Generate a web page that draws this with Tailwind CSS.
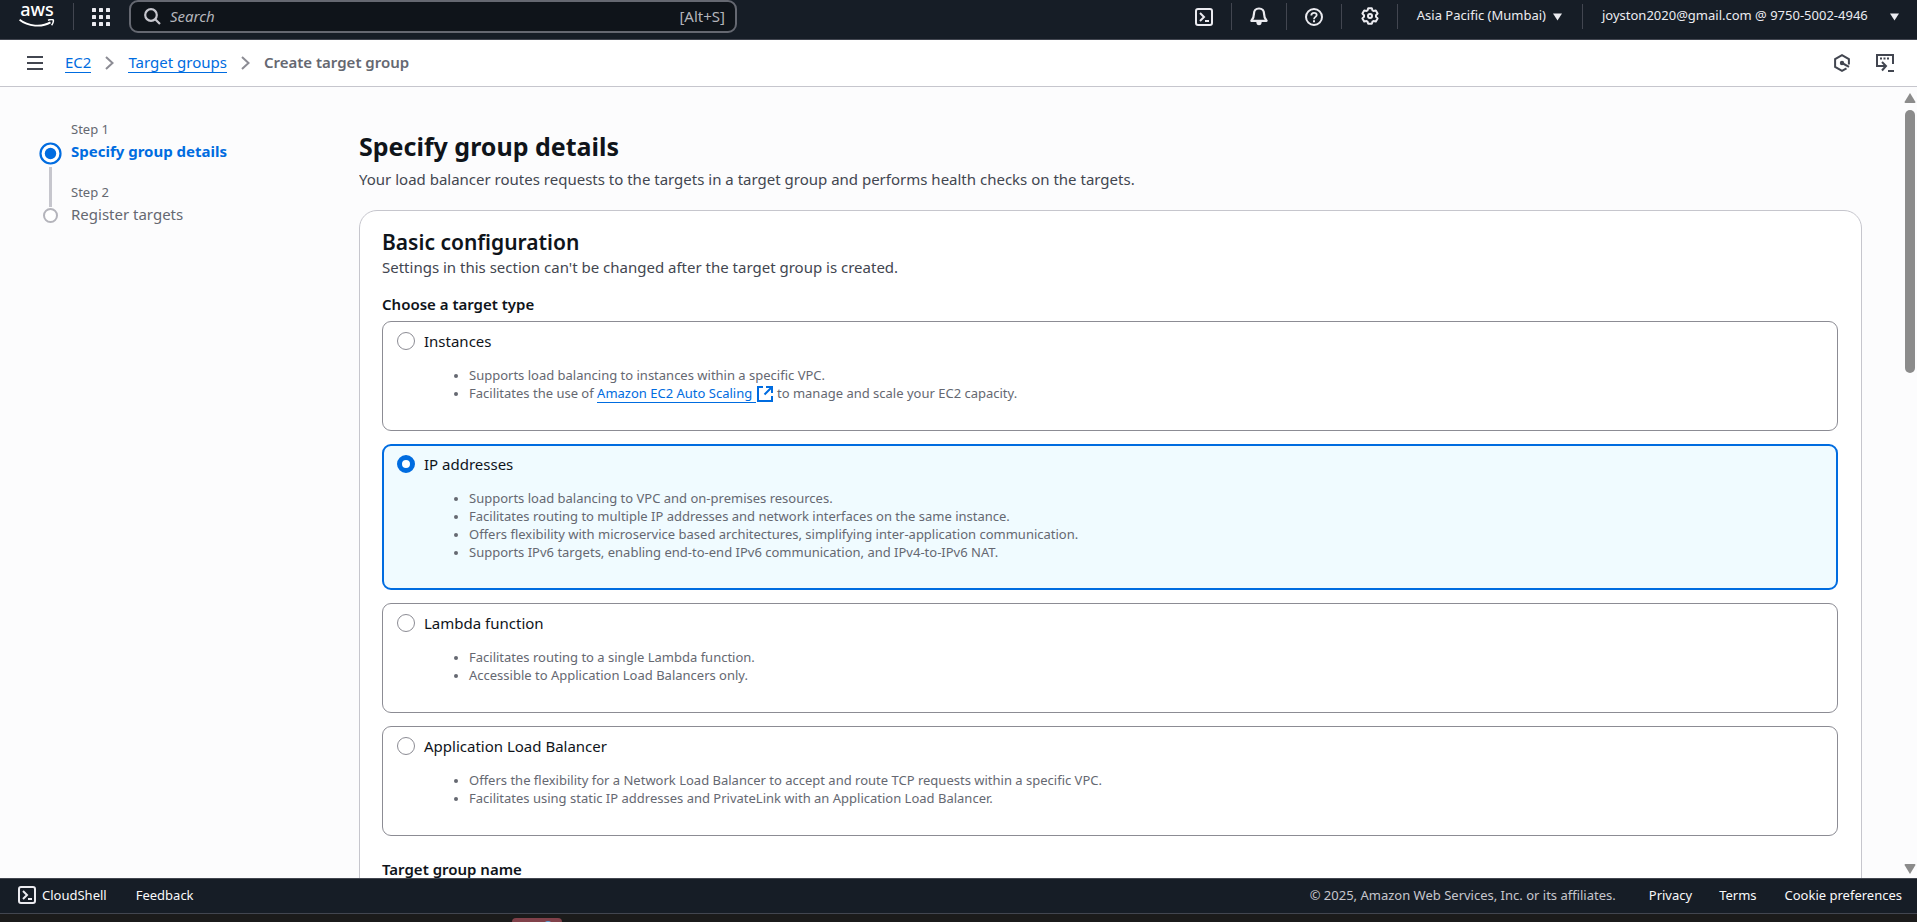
<!DOCTYPE html>
<html lang="en">
<head>
<meta charset="utf-8">
<meta name="viewport" content="width=device-width, initial-scale=1">
<title>Create target group | EC2</title>
<script src="https://cdn.jsdelivr.net/npm/@tailwindcss/browser@4"></script>
</head>
<body class="flex h-screen flex-col overflow-hidden bg-[#1b1b1b] font-['Noto_Sans','Open_Sans',sans-serif] text-[15px] leading-[22px] text-[#0f141a]">

<!-- Global navigation -->
<header class="flex h-10 shrink-0 items-start border-b border-[#424650] bg-[#161d26] text-[#ebebf0]">
  <a href="#" aria-label="AWS home" class="ml-[19px] mt-[2px] flex w-9 flex-col items-center text-white">
    <span class="h-[17px] text-[18px] leading-[15px] font-medium">aws</span>
    <svg class="h-2 w-9" viewBox="0 0 36 8" fill="none" aria-hidden="true"><path d="M.6.8C9 7.600 23 8.400 31.500 3.400" stroke="#fff" stroke-width="1.800"/><path d="M29 1.300c2-1.100 4.600-1 5.200-.4.500.7 0 3.500-1.600 5.300" stroke="#fff" stroke-width="1.500"/></svg>
  </a>
  <span class="ml-[18px] mt-[3px] h-[27px] w-px bg-[#424650]"></span>
  <button aria-label="Services" class="ml-[18px] mt-2">
    <svg class="size-[18px]" viewBox="0 0 18 18" fill="#ebebf0"><rect width="4" height="4" rx=".6"/><rect x="7" width="4" height="4" rx=".6"/><rect x="14" width="4" height="4" rx=".6"/><rect y="7" width="4" height="4" rx=".6"/><rect x="7" y="7" width="4" height="4" rx=".6"/><rect x="14" y="7" width="4" height="4" rx=".6"/><rect y="14" width="4" height="4" rx=".6"/><rect x="7" y="14" width="4" height="4" rx=".6"/><rect x="14" y="14" width="4" height="4" rx=".6"/></svg>
  </button>
  <label class="ml-[19px] flex h-[33px] w-[608px] items-center rounded-[9px] border-2 border-[#656871] bg-[#0f141a] pb-px pl-[13px] pr-[10px] text-[#b4b4bb]">
    <svg class="size-[17px]" viewBox="0 0 17 17" fill="none" stroke="#c6c6cd" stroke-width="2.200" aria-hidden="true"><circle cx="7" cy="7" r="5.800"/><path d="M11 11l5 5"/></svg>
    <input type="text" aria-label="Search" placeholder="Search" class="ml-[9px] min-w-0 flex-1 bg-transparent outline-none placeholder:italic placeholder:text-[#b4b4bb]">
    <span>[Alt+S]</span>
  </label>
  <nav class="ml-auto flex items-start text-[13px] leading-[26px]">
    <button aria-label="CloudShell" class="mt-2">
      <svg class="size-[18px]" viewBox="0 0 18 18" fill="none" stroke="#ebebf0" stroke-width="2"><rect x="1" y="1" width="16" height="16" rx="2"/><path d="M5 5l4 4-4 4M10 13h4"/></svg>
    </button>
    <span class="ml-[18px] mt-[3px] h-[27px] w-px bg-[#424650]"></span>
    <button aria-label="Notifications" class="ml-[18px] mt-[7px]">
      <svg class="h-[19px] w-[18px]" viewBox="0 0 18 19" fill="none" stroke="#ebebf0" stroke-width="2.200" stroke-linejoin="round"><path d="M9 1.500C5.600 1.500 4 4 4 6.500c0 3.800-.7 5-2.600 7.300h15.200C14.700 11.500 14 10.300 14 6.500c0-2.500-1.600-5-5-5z"/><path d="M6.300 15h5.400c0 2-1 3.300-2.700 3.300S6.300 17 6.300 15z" fill="#ebebf0" stroke="none"/></svg>
    </button>
    <span class="ml-[18px] mt-[3px] h-[27px] w-px bg-[#424650]"></span>
    <button aria-label="Support" class="ml-[18px] mt-2">
      <svg class="size-[18px]" viewBox="0 0 18 18" fill="none" stroke="#ebebf0" stroke-width="2"><circle cx="9" cy="9" r="8"/><path d="M6.300 7.400C6.300 5.700 7.400 4.800 9 4.800s2.700.9 2.700 2.300C11.700 8.800 9 9 9 11.200" stroke-width="1.800"/><path d="M9 12.200v2"/></svg>
    </button>
    <span class="ml-[18px] mt-1 h-[25px] w-px bg-[#424650]"></span>
    <button aria-label="Settings" class="ml-[19px] mt-[7px]">
      <svg class="size-[18px]" viewBox="0 0 18 18" fill="none" stroke="#ebebf0" stroke-width="2" stroke-linejoin="round"><path d="M7.200 1.200h3.600l.7 2.200 1 .6 2.300-.5 1.800 3.100L15 8.300v1.400l1.600 1.700-1.800 3.100-2.300-.5-1 .6-.7 2.200H7.200l-.7-2.200-1-.6-2.300.5-1.800-3.100L3 9.700V8.300L1.400 6.600l1.800-3.100 2.300.5 1-.6z"/><circle cx="9" cy="9" r="2"/></svg>
    </button>
    <span class="ml-[18px] mt-1 h-[25px] w-px bg-[#424650]"></span>
    <button class="ml-[19px] mt-[2px] flex items-center gap-[7px]">Asia Pacific (Mumbai)
      <svg class="mt-[3px] h-2 w-[9px]" viewBox="0 0 9 8" fill="#ebebf0"><path d="M0 .5h9L4.500 7.500z"/></svg>
    </button>
    <span class="ml-[20px] mt-1 h-[25px] w-px bg-[#424650]"></span>
    <button class="ml-[19px] mr-[18px] mt-[2px] flex min-w-[297px] items-center justify-between gap-[7px]">joyston2020@gmail.com @ 9750-5002-4946
      <svg class="mt-[3px] h-2 w-[9px]" viewBox="0 0 9 8" fill="#ebebf0"><path d="M0 .5h9L4.500 7.500z"/></svg>
    </button>
  </nav>
</header>

<!-- Breadcrumbs -->
<div class="flex h-[47px] shrink-0 items-center border-b border-[#c6c6cd] bg-white pb-px pl-[27px] pr-[23px]">
  <button aria-label="Open navigation"><svg class="h-[14px] w-4" viewBox="0 0 16 14" stroke="#424650" stroke-width="2"><path d="M0 1h16M0 7h16M0 13h16"/></svg></button>
  <nav aria-label="Breadcrumbs" class="ml-[22px] flex items-center gap-[14px]">
    <a href="#" class="border-b border-[#006ce0] leading-[20px] text-[#006ce0]">EC2</a>
    <svg class="h-[14px] w-[9px]" viewBox="0 0 9 14" fill="none" stroke="#8c8c94" stroke-width="2" aria-hidden="true"><path d="M1 1l6.500 6L1 13"/></svg>
    <a href="#" class="border-b border-[#006ce0] leading-[20px] text-[#006ce0]">Target groups</a>
    <svg class="h-[14px] w-[9px]" viewBox="0 0 9 14" fill="none" stroke="#8c8c94" stroke-width="2" aria-hidden="true"><path d="M1 1l6.500 6L1 13"/></svg>
    <span aria-current="page" class="leading-[21px] font-semibold text-[#656871]">Create target group</span>
  </nav>
  <div class="ml-auto flex items-center gap-[26px]">
    <button aria-label="Amazon Q"><svg class="h-[18px] w-4" viewBox="0 0 16 18" fill="none" stroke="#424650" stroke-width="2"><path d="M14.900 10.500V5.100L8 1.200 1.100 5.100v7.800L8 16.800l4.500-2.500"/><circle cx="8" cy="9" r="2.200" fill="#424650" stroke="none"/><path d="M8 9l7 3.800"/></svg></button>
    <button aria-label="Open in CloudShell"><svg class="size-[18px]" viewBox="0 0 18 18" fill="none" stroke="#424650" stroke-width="2"><path d="M4 12H1V1h16v9"/><path d="M4 4.500h2M7.500 4.500h2M11 4.500h2"/><path d="M4 12h6M6 8l4 4-4 4.500M12 17h6"/></svg></button>
  </div>
</div>

<!-- Page body -->
<div class="flex min-h-0 flex-1 bg-[#fcfcfd]">
  <aside class="w-[359px] shrink-0 pl-[39px] pt-[32px]">
    <ol>
      <li class="flex gap-[9px]">
        <div class="flex w-[23px] flex-col items-center pt-[23px]">
          <svg class="size-[23px]" viewBox="0 0 23 23" aria-hidden="true"><circle cx="11.500" cy="11.500" r="10" fill="#fff" stroke="#006ce0" stroke-width="2.200"/><circle cx="11.500" cy="11.500" r="5.700" fill="#006ce0"/></svg>
          <span class="mt-[2px] h-[40px] w-[3px] bg-[#c6c6cd]"></span>
        </div>
        <div>
          <div class="text-[13px] leading-5 text-[#656871]">Step 1</div>
          <a href="#" aria-current="step" class="block leading-[24px] font-bold text-[#006ce0]">Specify group details</a>
          <div class="mt-[19px] text-[13px] leading-5 text-[#656871]">Step 2</div>
        </div>
      </li>
      <li class="-mt-[6px] flex items-center gap-[9px]">
        <span class="flex w-[23px] justify-center pt-[3px]"><span class="size-[15px] rounded-full border-2 border-[#b4b4bb] bg-white"></span></span>
        <span class="leading-[26px] text-[#656871]">Register targets</span>
      </li>
    </ol>
  </aside>

  <main class="min-w-0 flex-1 overflow-hidden pr-[41px] pt-[42px]">
    <h1 class="text-[25px] leading-[34px] font-bold">Specify group details</h1>
    <p class="mt-[5px] text-[#424650]">Your load balancer routes requests to the targets in a target group and performs health checks on the targets.</p>

    <section class="mt-5 rounded-[18px] border border-[#c6c6cd] bg-white pb-8 pl-[22px] pr-[23px] pt-[17px]">
      <h2 class="text-[21px] leading-[28px] font-semibold">Basic configuration</h2>
      <p class="text-[#424650]">Settings in this section can't be changed after the target group is created.</p>

      <fieldset class="mt-[15px] min-w-0">
        <legend class="mb-[6px] leading-[22px] font-semibold">Choose a target type</legend>
        <div class="flex flex-col gap-[13px]">
          <div class="rounded-[9px] border border-[#8c8c94] px-[14px] pb-[28px] pt-[8px]">
            <label class="flex items-center gap-[9px]"><input type="radio" name="type" class="size-[18px] appearance-none rounded-full border border-[#8c8c94] bg-white checked:border-[5px] checked:border-[#006ce0]">Instances</label>
            <ul class="mt-[14px] list-disc pl-[72px] text-[13px] leading-[18px] text-[#656871] marker:text-[11px]">
              <li>Supports load balancing to instances within a specific VPC.</li>
              <li>Facilitates the use of <a href="#" class="border-b border-[#006ce0] text-[#006ce0]">Amazon EC2 Auto Scaling </a><svg class="mx-px inline-block size-4 align-[-4px]" viewBox="0 0 16 16" fill="none" stroke="#006ce0" stroke-width="2" aria-label="Opens in new tab"><path d="M6 1H1v14h14v-5M9 1h6v6M15 1L7.500 8.500"/></svg> to manage and scale your EC2 capacity.</li>
            </ul>
          </div>
          <div class="rounded-[9px] border-2 border-[#006ce0] bg-[#f0fbff] px-[13px] pb-[27px] pt-[7px]">
            <label class="flex items-center gap-[9px]"><input type="radio" name="type" checked class="size-[18px] appearance-none rounded-full border border-[#8c8c94] bg-white checked:border-[5px] checked:border-[#006ce0]">IP addresses</label>
            <ul class="mt-[14px] list-disc pl-[72px] text-[13px] leading-[18px] text-[#656871] marker:text-[11px]">
              <li>Supports load balancing to VPC and on-premises resources.</li>
              <li>Facilitates routing to multiple IP addresses and network interfaces on the same instance.</li>
              <li>Offers flexibility with microservice based architectures, simplifying inter-application communication.</li>
              <li>Supports IPv6 targets, enabling end-to-end IPv6 communication, and IPv4-to-IPv6 NAT.</li>
            </ul>
          </div>
          <div class="rounded-[9px] border border-[#8c8c94] px-[14px] pb-[28px] pt-[8px]">
            <label class="flex items-center gap-[9px]"><input type="radio" name="type" class="size-[18px] appearance-none rounded-full border border-[#8c8c94] bg-white checked:border-[5px] checked:border-[#006ce0]">Lambda function</label>
            <ul class="mt-[14px] list-disc pl-[72px] text-[13px] leading-[18px] text-[#656871] marker:text-[11px]">
              <li>Facilitates routing to a single Lambda function.</li>
              <li>Accessible to Application Load Balancers only.</li>
            </ul>
          </div>
          <div class="rounded-[9px] border border-[#8c8c94] px-[14px] pb-[28px] pt-[8px]">
            <label class="flex items-center gap-[9px]"><input type="radio" name="type" class="size-[18px] appearance-none rounded-full border border-[#8c8c94] bg-white checked:border-[5px] checked:border-[#006ce0]">Application Load Balancer</label>
            <ul class="mt-[14px] list-disc pl-[72px] text-[13px] leading-[18px] text-[#656871] marker:text-[11px]">
              <li>Offers the flexibility for a Network Load Balancer to accept and route TCP requests within a specific VPC.</li>
              <li>Facilitates using static IP addresses and PrivateLink with an Application Load Balancer.</li>
            </ul>
          </div>
        </div>
      </fieldset>
      <h3 class="mt-[22px] font-semibold">Target group name</h3>
    </section>
  </main>

  <!-- Scroll bar -->
  <div class="flex w-[14px] shrink-0 flex-col items-center pb-1 pt-[6px]" aria-hidden="true">
    <svg class="h-[10px] w-3" viewBox="0 0 12 10" fill="#8b8b8b"><path d="M6 0l5.500 9q0 1-1 1h-9q-1 0-1-1z"/></svg>
    <span class="mt-[7px] h-[263px] w-[10px] rounded-full bg-[#8b8b8b]"></span>
    <svg class="mt-auto h-[10px] w-3" viewBox="0 0 12 10" fill="#8b8b8b"><path d="M6 10L.5 1q0-1 1-1h9q1 0 1 1z"/></svg>
  </div>
</div>

<!-- Footer -->
<footer class="flex h-[36px] shrink-0 items-center border-y border-[#424650] bg-[#161d26] pb-[2px] pl-[18px] pr-[15px] text-[13px] text-[#f9f9fa]">
  <button class="flex items-center gap-[6px]"><svg class="size-[18px]" viewBox="0 0 18 18" fill="none" stroke="#ebebf0" stroke-width="2" aria-hidden="true"><rect x="1" y="1" width="16" height="16" rx="2"/><path d="M5 5l4 4-4 4M10 13h4"/></svg>CloudShell</button>
  <button class="ml-[29px]">Feedback</button>
  <span class="ml-auto text-[#c6c6cd]">© 2025, Amazon Web Services, Inc. or its affiliates.</span>
  <a href="#" class="ml-[33px]">Privacy</a>
  <a href="#" class="ml-[27px]">Terms</a>
  <button class="ml-[28px]">Cookie preferences</button>
</footer>

<!-- Top edge of the desktop taskbar -->
<div class="flex h-2 shrink-0 items-end overflow-hidden bg-[#1b1b1b] pl-[512px]" aria-hidden="true">
  <div class="flex h-1 w-[50px] justify-center overflow-hidden rounded-t-[4px] bg-[#80414a] pl-[22px]"><span class="mt-[3px] size-2 rounded-full bg-[#5ba3d9]"></span></div>
</div>
</body>
</html>
